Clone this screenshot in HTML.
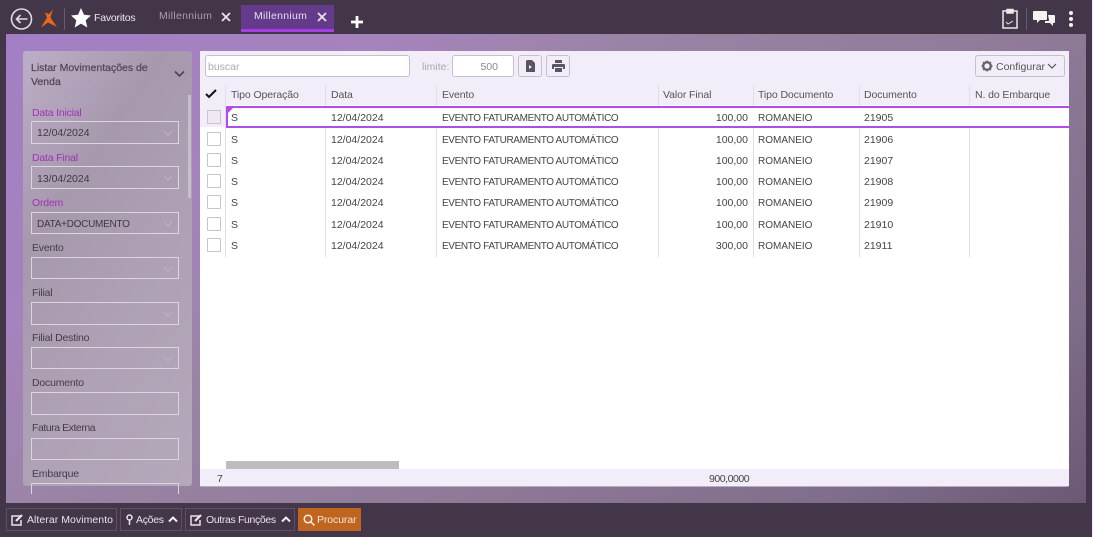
<!DOCTYPE html>
<html><head><meta charset="utf-8"><style>
*{box-sizing:border-box}
html,body{margin:0;padding:0;width:1093px;height:537px;overflow:hidden;background:#443649;font-family:"Liberation Sans",sans-serif;font-size:10.5px;color:#444}
.a{position:absolute;white-space:nowrap}
#main{left:6px;top:34px;width:1080px;height:469px;background:linear-gradient(142deg,#a27fc4 0%,#a583bc 23%,#9a84a5 38%,#8f7a98 62%,#7f6e8b 85%,#6a5874 100%)}
#side{left:23px;top:51px;width:169px;height:435px;border-radius:3px;background:linear-gradient(125deg,#bcaec6 0%,#a699ad 30%,#aea1b5 60%,#b4a8bb 100%);overflow:hidden}
#panel{left:200px;top:51px;width:869px;height:435px;background:#fff;border-radius:2px;overflow:hidden;box-shadow:0 1px 0 #b8adbd}
.lb{color:#443c48;font-size:10.5px;letter-spacing:-.2px;margin-top:1px}
.pl{color:#a32fb8}
.f{position:absolute;left:31px;width:148px;height:22.5px;border:1.5px solid #dcd5e0;color:#3f3a42;padding:5px 5px;font-size:10.5px;line-height:13px}
.f svg{position:absolute;right:5px;top:8px}
.hd{color:#555;font-size:10.5px;letter-spacing:-.1px}
.sep{position:absolute;width:1px;background:#e2dde6}
.cb{position:absolute;left:207px;width:14px;height:14px;border:1px solid #c9c3cd;background:#fff;border-radius:1px}
.btn{position:absolute;top:508px;height:23px;border:1px solid #5e5065;color:#e8e3ea;font-size:10.5px;line-height:23px}
.tool{position:absolute;top:55px;border:1px solid #c8bfcc;border-radius:3px;background:#f3edf9}
.u{font-size:10px;letter-spacing:-.37px;margin-top:1px}
.r{font-size:10px;margin-top:1px}
</style></head><body>
<div class="a" id="main"></div>
<div class="a" style="left:1092px;top:0;width:1px;height:537px;background:#efeaf0"></div>

<svg class="a" style="left:10px;top:7px" width="24" height="24" viewBox="0 0 24 24" fill="none" stroke="#ddd" stroke-width="1.6"><circle cx="11.5" cy="12" r="10"/><path d="M17.500 12H6.500M10.500 8l-4 4 4 4"/></svg>
<svg class="a" style="left:40px;top:9px" width="18" height="20" viewBox="0 0 18 20"><path d="M13 0.500L9 5 5 3.500 7 8.500 1 18.500 8 13.500 17 18 12 11 10.500 8z" fill="#e8681b"/></svg>
<div class="a" style="left:64px;top:8px;width:1px;height:22px;background:#6a5c70"></div>
<svg class="a" style="left:71px;top:8px" width="20" height="20" viewBox="0 0 20 20"><path d="M10 0l3 6.800 7 .7-5.300 4.700 1.600 7.300L10 15.600l-6.300 3.900 1.600-7.300L0 7.500l7-.7z" fill="#fff"/></svg>
<div class="a" style="left:94px;top:12px;color:#ece8ee;font-size:10.5px;letter-spacing:-.2px">Favoritos</div>
<div class="a" style="left:159px;top:10px;color:#a99eb0;font-size:10.5px;letter-spacing:.3px">Millennium</div>
<svg class="a" style="left:221px;top:12px" width="10" height="10" viewBox="0 0 10 10" stroke="#e8e4ea" stroke-width="1.800"><path d="M1 1l8 8M9 1l-8 8"/></svg>
<div class="a" style="left:241px;top:5px;width:93px;height:27px;background:#643a8a;border-bottom:3px solid #a63ee8"></div>
<div class="a" style="left:254px;top:10px;color:#e6dfec;font-size:10.5px;letter-spacing:.3px">Millennium</div>
<svg class="a" style="left:317px;top:12px" width="10" height="10" viewBox="0 0 10 10" stroke="#e8e4ea" stroke-width="1.800"><path d="M1 1l8 8M9 1l-8 8"/></svg>
<svg class="a" style="left:351px;top:16px" width="12" height="12" viewBox="0 0 13 13" fill="#fff"><path d="M5 0h3v5h5v3H8v5H5V8H0V5h5z"/></svg>

<svg class="a" style="left:1002px;top:8px" width="16" height="21" viewBox="0 0 16 21" fill="none" stroke="#e8e8e8" stroke-width="1.500"><path d="M5 3H1v17h14V3h-4"/><path d="M5 1.500h6V5H5z" fill="#eee"/><path d="M4 14l2 2 5-3" stroke-width="1"/></svg>
<div class="a" style="left:1026px;top:8px;width:1px;height:22px;background:#6a5c70"></div>
<svg class="a" style="left:1033px;top:11px" width="22" height="16" viewBox="0 0 22 16" fill="#f2f2f2"><path d="M1 0h12a1 1 0 011 1v7a1 1 0 01-1 1H7l-3 3V9H1a1 1 0 01-1-1V1a1 1 0 011-1z"/><path d="M15 4h6a1 1 0 011 1v6a1 1 0 01-1 1h-1v3l-3-3h-5v-2h3a1 1 0 001-1z"/></svg>
<div class="a" style="left:1069px;top:11px;width:4px;height:4px;border-radius:2px;background:#f2f2f2"></div>
<div class="a" style="left:1069px;top:17px;width:4px;height:4px;border-radius:2px;background:#f2f2f2"></div>
<div class="a" style="left:1069px;top:23px;width:4px;height:4px;border-radius:2px;background:#f2f2f2"></div>

<div class="a" id="side"></div>
<div class="a" style="left:31px;top:61px;white-space:normal;width:125px;line-height:14px;color:#524857;font-size:10.5px;-webkit-text-stroke:.25px #524857">Listar Movimentações de Venda</div>
<svg class="a" style="left:174px;top:70px" width="11" height="8" viewBox="0 0 11 8" fill="none" stroke="#4d4352" stroke-width="1.600"><path d="M1 1.500l4.500 4.500L10 1.500"/></svg>
<div class="a" style="left:188px;top:95px;width:3px;height:103px;background:#c6bfca"></div>

<div class="a lb pl" style="left:32px;top:106px">Data Inicial</div>
<div class="f" style="top:121px">12/04/2024<svg width="10" height="6" viewBox="0 0 10 6" fill="none" stroke="#bcb2c0" stroke-width="1.200"><path d="M1 1l4 4 4-4"/></svg></div>
<div class="a lb pl" style="left:32px;top:151px">Data Final</div>
<div class="f" style="top:166px;padding-top:6px">13/04/2024<svg width="10" height="6" viewBox="0 0 10 6" fill="none" stroke="#bcb2c0" stroke-width="1.200"><path d="M1 1l4 4 4-4"/></svg></div>
<div class="a lb pl" style="left:32px;top:196px">Ordem</div>
<div class="f" style="top:211.5px;letter-spacing:-.27px;font-size:10px;padding-top:5px">DATA+DOCUMENTO<svg width="10" height="6" viewBox="0 0 10 6" fill="none" stroke="#bcb2c0" stroke-width="1.200"><path d="M1 1l4 4 4-4"/></svg></div>
<div class="a lb" style="left:32px;top:241px">Evento</div>
<div class="f" style="top:256.7px"><svg width="10" height="6" viewBox="0 0 10 6" fill="none" stroke="#bcb2c0" stroke-width="1.200"><path d="M1 1l4 4 4-4"/></svg></div>
<div class="a lb" style="left:32px;top:286px">Filial</div>
<div class="f" style="top:302px"><svg width="10" height="6" viewBox="0 0 10 6" fill="none" stroke="#bcb2c0" stroke-width="1.200"><path d="M1 1l4 4 4-4"/></svg></div>
<div class="a lb" style="left:32px;top:331px">Filial Destino</div>
<div class="f" style="top:346.7px"><svg width="10" height="6" viewBox="0 0 10 6" fill="none" stroke="#bcb2c0" stroke-width="1.200"><path d="M1 1l4 4 4-4"/></svg></div>
<div class="a lb" style="left:32px;top:376px">Documento</div>
<div class="f" style="top:392px"></div>
<div class="a lb" style="left:32px;top:421px;letter-spacing:-.45px">Fatura Externa</div>
<div class="f" style="top:437.500px"></div>
<div class="a lb" style="left:32px;top:467px">Embarque</div>
<div class="f" style="top:483px;height:3px;border-bottom:0"></div>

<div class="a" id="panel"></div>
<div class="a" style="left:200px;top:51px;width:869px;height:54px;background:#f3edf9"></div>
<div class="a" style="left:200px;top:105px;width:26px;height:22px;background:#f3edf9"></div>
<div class="a" style="left:200px;top:469px;width:869px;height:17px;background:#f3edf9"></div>
<div class="a" style="left:205px;top:55px;width:205px;height:22px;border:1px solid #c8bfcc;border-radius:3px;background:#fff;color:#aaa;padding:5px 2px;line-height:12px">buscar</div>
<div class="a" style="left:422px;top:61px;color:#aaa">limite:</div>
<div class="a" style="left:452px;top:55px;width:62px;height:22px;border:1px solid #c8bfcc;border-radius:3px;background:#fff;color:#888;padding:5px 15px 4px 0;text-align:right;line-height:12px">500</div>
<div class="tool" style="left:518px;width:24px;height:22px"><svg style="position:absolute;left:7px;top:4px" width="9" height="12" viewBox="0 0 9 12"><path d="M1 0h5l3 3v9H0V1z" fill="#5a5560"/><path d="M3 5l3 2-3 2z" fill="#f3edf9"/></svg></div>
<div class="tool" style="left:546px;width:24px;height:22px"><svg style="position:absolute;left:5px;top:4px" width="13" height="12" viewBox="0 0 13 12" fill="#5a5560"><path d="M3 0h7v3H3zM1 4h11a1 1 0 011 1v4h-2V7H2v2H0V5a1 1 0 011-1zM3 8h7v4H3z"/></svg></div>
<div class="tool" style="left:975px;width:90px;height:22px;color:#555;padding:5px 0 0 20px;line-height:13px">Configurar<svg style="position:absolute;left:5px;top:4px" width="12" height="12" viewBox="0 0 12 12" fill="none" stroke="#666"><circle cx="6" cy="6" r="3.800" stroke-width="2.400"/><path d="M6 .5v1.500M6 10v1.500M.5 6H2M10 6h1.500M2 2l1 1M9 9l1 1M10 2L9 3M3 9l-1 1" stroke-width="1.400"/></svg><svg style="position:absolute;left:71px;top:7px" width="10" height="7" viewBox="0 0 10 7" fill="none" stroke="#555" stroke-width="1.200"><path d="M1 1l4 4 4-4"/></svg></div>

<svg class="a" style="left:205px;top:89px" width="12" height="10" viewBox="0 0 12 10" fill="none" stroke="#111" stroke-width="2"><path d="M1 5l3 3 7-7"/></svg>
<div class="sep" style="left:225px;top:85px;height:172px"></div>
<div class="sep" style="left:325px;top:85px;height:172px"></div>
<div class="sep" style="left:436px;top:85px;height:172px"></div>
<div class="sep" style="left:658px;top:85px;height:172px"></div>
<div class="sep" style="left:753px;top:85px;height:172px"></div>
<div class="sep" style="left:859px;top:85px;height:172px"></div>
<div class="sep" style="left:969px;top:85px;height:172px"></div>
<div class="a hd" style="left:231px;top:89px">Tipo Operação</div>
<div class="a hd" style="left:331px;top:89px">Data</div>
<div class="a hd" style="left:442px;top:89px">Evento</div>
<div class="a hd" style="left:663px;top:89px">Valor Final</div>
<div class="a hd" style="left:758px;top:89px">Tipo Documento</div>
<div class="a hd" style="left:864px;top:89px">Documento</div>
<div class="a hd" style="left:975px;top:89px">N. do Embarque</div>

<div class="a" style="left:226px;top:106px;width:843px;height:22px;border:2px solid #b14ce8;border-right:0;background:#fff"></div>
<div class="a" style="left:228px;top:108px;width:0;height:0;border-top:5px solid #b14ce8;border-right:5px solid transparent"></div>

<div class="cb" style="top:110px;background:#efeaf2"></div>
<div class="a" style="left:231px;top:112px">S</div><div class="a" style="left:331px;top:112px">12/04/2024</div><div class="a u" style="left:442px;top:112px">EVENTO FATURAMENTO AUTOMÁTICO</div><div class="a" style="left:708px;width:40px;text-align:right;top:112px">100,00</div><div class="a r" style="left:758px;top:112px">ROMANEIO</div><div class="a" style="left:864px;top:112px">21905</div>
<div class="cb" style="top:132px"></div>
<div class="a" style="left:231px;top:134px">S</div><div class="a" style="left:331px;top:134px">12/04/2024</div><div class="a u" style="left:442px;top:134px">EVENTO FATURAMENTO AUTOMÁTICO</div><div class="a" style="left:708px;width:40px;text-align:right;top:134px">100,00</div><div class="a r" style="left:758px;top:134px">ROMANEIO</div><div class="a" style="left:864px;top:134px">21906</div>
<div class="cb" style="top:153px"></div>
<div class="a" style="left:231px;top:155px">S</div><div class="a" style="left:331px;top:155px">12/04/2024</div><div class="a u" style="left:442px;top:155px">EVENTO FATURAMENTO AUTOMÁTICO</div><div class="a" style="left:708px;width:40px;text-align:right;top:155px">100,00</div><div class="a r" style="left:758px;top:155px">ROMANEIO</div><div class="a" style="left:864px;top:155px">21907</div>
<div class="cb" style="top:174px"></div>
<div class="a" style="left:231px;top:176px">S</div><div class="a" style="left:331px;top:176px">12/04/2024</div><div class="a u" style="left:442px;top:176px">EVENTO FATURAMENTO AUTOMÁTICO</div><div class="a" style="left:708px;width:40px;text-align:right;top:176px">100,00</div><div class="a r" style="left:758px;top:176px">ROMANEIO</div><div class="a" style="left:864px;top:176px">21908</div>
<div class="cb" style="top:195px"></div>
<div class="a" style="left:231px;top:197px">S</div><div class="a" style="left:331px;top:197px">12/04/2024</div><div class="a u" style="left:442px;top:197px">EVENTO FATURAMENTO AUTOMÁTICO</div><div class="a" style="left:708px;width:40px;text-align:right;top:197px">100,00</div><div class="a r" style="left:758px;top:197px">ROMANEIO</div><div class="a" style="left:864px;top:197px">21909</div>
<div class="cb" style="top:217px"></div>
<div class="a" style="left:231px;top:219px">S</div><div class="a" style="left:331px;top:219px">12/04/2024</div><div class="a u" style="left:442px;top:219px">EVENTO FATURAMENTO AUTOMÁTICO</div><div class="a" style="left:708px;width:40px;text-align:right;top:219px">100,00</div><div class="a r" style="left:758px;top:219px">ROMANEIO</div><div class="a" style="left:864px;top:219px">21910</div>
<div class="cb" style="top:238px"></div>
<div class="a" style="left:231px;top:240px">S</div><div class="a" style="left:331px;top:240px">12/04/2024</div><div class="a u" style="left:442px;top:240px">EVENTO FATURAMENTO AUTOMÁTICO</div><div class="a" style="left:708px;width:40px;text-align:right;top:240px">300,00</div><div class="a r" style="left:758px;top:240px">ROMANEIO</div><div class="a" style="left:864px;top:240px">21911</div>

<div class="a" style="left:226px;top:461px;width:173px;height:8px;background:#bdbdbd"></div>
<div class="a" style="left:217px;top:473px">7</div>
<div class="a" style="left:709px;top:473px;letter-spacing:-.45px">900,0000</div>

<div class="btn" style="left:6px;width:111px;padding-left:20px;letter-spacing:.05px">Alterar Movimento<svg style="position:absolute;left:4px;top:5px" width="13" height="12" viewBox="0 0 13 12" fill="none" stroke="#e8e3ea" stroke-width="1.500"><path d="M9 2H1v9h9V6"/><path d="M5 7l6-6" stroke-width="2.200"/></svg></div>
<div class="btn" style="left:120px;width:62px;padding-left:15px;letter-spacing:-.3px">Ações<svg style="position:absolute;left:5px;top:5px" width="7" height="12" viewBox="0 0 7 12" fill="none" stroke="#e8e3ea" stroke-width="1.500"><circle cx="3.500" cy="3.500" r="2.500"/><path d="M3.500 6v5"/></svg><svg style="position:absolute;left:47px;top:7px" width="10" height="7" viewBox="0 0 10 7" fill="none" stroke="#f2eef4" stroke-width="2"><path d="M1 5.500l4-4 4 4"/></svg></div>
<div class="btn" style="left:185px;width:110px;padding-left:20px;letter-spacing:-.35px">Outras Funções<svg style="position:absolute;left:4px;top:5px" width="13" height="12" viewBox="0 0 13 12" fill="none" stroke="#e8e3ea" stroke-width="1.500"><path d="M9 2H1v9h9V6"/><path d="M5 7l6-6" stroke-width="2.200"/></svg><svg style="position:absolute;left:95px;top:7px" width="10" height="7" viewBox="0 0 10 7" fill="none" stroke="#f2eef4" stroke-width="2"><path d="M1 5.500l4-4 4 4"/></svg></div>
<div class="btn" style="left:298px;width:63px;padding-left:18px;background:#c0651f;border-color:#c0651f;color:#f6e6d8;letter-spacing:-.1px">Procurar<svg style="position:absolute;left:4px;top:5px" width="12" height="12" viewBox="0 0 12 12" fill="none" stroke="#fbeee2" stroke-width="1.500"><circle cx="5" cy="5" r="3.800"/><path d="M8 8l3.500 3.500"/></svg></div>
</body></html>
